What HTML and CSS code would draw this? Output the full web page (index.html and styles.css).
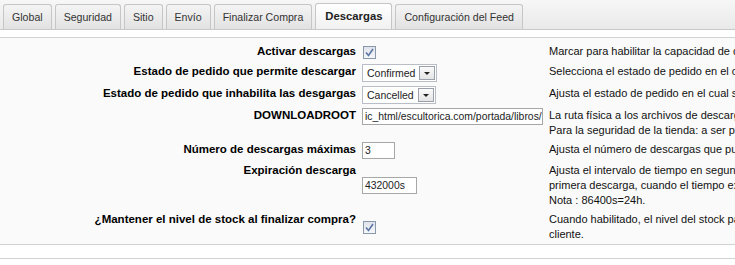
FILE: index.html
```html
<!DOCTYPE html>
<html lang="es">
<head>
    <meta charset="UTF-8">
    <title>Configuración - Descargas</title>
    <link rel="stylesheet" href="styles.css">
</head>
<body>
    <div class="tabs">
        <span class="tab">Global</span>
        <span class="tab">Seguridad</span>
        <span class="tab">Sitio</span>
        <span class="tab">Envío</span>
        <span class="tab">Finalizar Compra</span>
        <span class="tab active">Descargas</span>
        <span class="tab">Configuración del Feed</span>
    </div>

    <div class="panel">
        <table class="settings">
            <tr>
                <td class="label">Activar descargas</td>
                <td class="field">
                    <span class="check">
                        <svg width="9" height="9" viewBox="0 0 9 9"><path d="M1 4.5 L3.5 7.5 L8 1" fill="none" stroke="#5d76a8" stroke-width="1.6"/></svg>
                    </span>
                </td>
                <td class="desc">Marcar para habilitar la capacidad de descargar productos.</td>
            </tr>
            <tr>
                <td class="label">Estado de pedido que permite descargar</td>
                <td class="field">
                    <span class="select">Confirmed<span class="arrow"></span></span>
                </td>
                <td class="desc">Selecciona el estado de pedido en el cual se permite la descarga.</td>
            </tr>
            <tr>
                <td class="label">Estado de pedido que inhabilita las desgargas</td>
                <td class="field">
                    <span class="select">Cancelled<span class="arrow"></span></span>
                </td>
                <td class="desc">Ajusta el estado de pedido en el cual se inhabilitan las descargas.</td>
            </tr>
            <tr>
                <td class="label">DOWNLOADROOT</td>
                <td class="field top">
                    <span class="text wide">ic_html/escultorica.com/portada/libros/</span>
                </td>
                <td class="desc">La ruta física a los archivos de descarga.<br>Para la seguridad de la tienda: a ser posible fuera de la raíz web.</td>
            </tr>
            <tr>
                <td class="label">Número de descargas máximas</td>
                <td class="field">
                    <span class="text small">3</span>
                </td>
                <td class="desc">Ajusta el número de descargas que pueden hacerse.</td>
            </tr>
            <tr>
                <td class="label">Expiración descarga</td>
                <td class="field">
                    <span class="text medium">432000s</span>
                </td>
                <td class="desc">Ajusta el intervalo de tiempo en segundos para la expiración tras la<br>primera descarga, cuando el tiempo expira no se puede descargar.<br>Nota : 86400s=24h.</td>
            </tr>
            <tr>
                <td class="label">¿Mantener el nivel de stock al finalizar compra?</td>
                <td class="field">
                    <span class="check">
                        <svg width="9" height="9" viewBox="0 0 9 9"><path d="M1 4.5 L3.5 7.5 L8 1" fill="none" stroke="#5d76a8" stroke-width="1.6"/></svg>
                    </span>
                </td>
                <td class="desc">Cuando habilitado, el nivel del stock para las descargas no se reduce al<br>cliente.</td>
            </tr>
        </table>
    </div>

    <div class="footer"></div>
</body>
</html>
```

FILE: styles.css
```css
* {
    box-sizing: border-box;
}

body {
    margin: 0;
    width: 735px;
    height: 265px;
    overflow: hidden;
    background: #ffffff;
    font-family: 'Liberation Sans', Arial, sans-serif;
    font-size: 11px;
    color: #000;
}

/* tab strip */
.tabs {
    display: flex;
    align-items: flex-end;
    gap: 3px;
    height: 30px;
    padding-left: 3px;
    background: linear-gradient(#f7f7f7, #e9e9e9);
    border-bottom: 1px solid #c9c9c9;
}

.tab {
    height: 25px;
    padding: 0 8px;
    line-height: 24px;
    font-size: 10.6px;
    color: #333;
    background: linear-gradient(#f4f4f4, #e2e2e2);
    border: 1px solid #c6c6c6;
    border-bottom: none;
    border-radius: 3px 3px 0 0;
}

.tab.active {
    height: 26px;
    line-height: 25px;
    padding: 0 9px;
    font-weight: bold;
    font-size: 11.3px;
    color: #222;
    background: linear-gradient(#ffffff, #f1f1f1);
}

/* settings panel */
.panel {
    margin-top: 7px;
    background: #fafafa;
    border-top: 1px solid #d2d2d2;
    border-bottom: 1px solid #d2d2d2;
    padding: 4px 0 0;
    overflow: hidden;
}

.settings {
    border-collapse: collapse;
    width: 1000px;
    table-layout: fixed;
}

.settings td {
    padding: 2px 3px;
    line-height: 15px;
}

.settings .label {
    width: 360px;
    text-align: right;
    font-weight: bold;
    font-size: 11.5px;
    vertical-align: top;
    padding-right: 4px;
}

.settings .field {
    width: 186px;
    vertical-align: middle;
    padding-left: 2px;
}

.settings .field.top {
    vertical-align: top;
}

.settings .desc {
    vertical-align: top;
    white-space: nowrap;
    color: #111;
}

.check {
    display: inline-flex;
    align-items: center;
    justify-content: center;
    width: 13px;
    height: 13px;
    margin: 2px 0 1px 1px;
    vertical-align: middle;
    border: 1px solid #8a98ac;
    background: linear-gradient(#dfe3ea, #f6f7f9);
}

.select {
    display: inline-flex;
    align-items: center;
    height: 18px;
    padding-left: 4px;
    border: 1px solid #b9bec6;
    background: #fff;
    font-size: 10.5px;
    color: #222;
    vertical-align: middle;
}

.arrow {
    position: relative;
    width: 16px;
    height: 14px;
    margin: 0 1px 0 4px;
    border: 1px solid #9aa1ab;
    background: linear-gradient(#fbfbfb, #e4e4e4);
}

.arrow::after {
    content: "";
    position: absolute;
    left: 4px;
    top: 5px;
    border-left: 3.5px solid transparent;
    border-right: 3.5px solid transparent;
    border-top: 3.5px solid #222;
}

.text {
    display: inline-block;
    height: 17px;
    padding: 0 2px;
    line-height: 15px;
    border: 1px solid #a7a7a7;
    background: #fff;
    font-size: 10.4px;
    color: #222;
    white-space: nowrap;
    overflow: hidden;
    vertical-align: middle;
}

.text.wide {
    width: 181px;
}

.text.small {
    width: 33px;
}

.text.medium {
    width: 55px;
}

.footer {
    margin-top: 13px;
    border-top: 1px solid #d2d2d2;
}
```
